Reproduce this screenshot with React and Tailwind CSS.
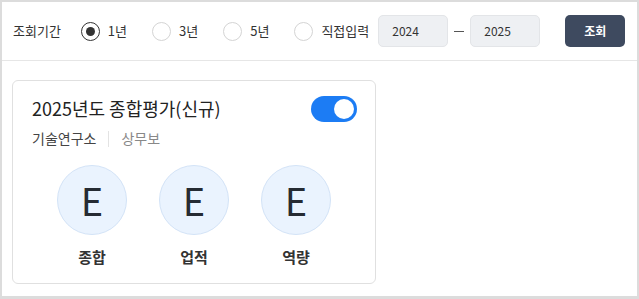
import React from "react";

function Radio({ checked, label }) {
  return (
    <label className="flex items-center gap-[8px]">
      <span
        className={
          "flex h-[19px] w-[19px] items-center justify-center rounded-full border bg-white " +
          (checked ? "border-[#333] border-[1.5px]" : "border-[#d4d4d4]")
        }
      >
        {checked && <span className="h-[9px] w-[9px] rounded-full bg-[#333]" />}
      </span>
      <span className="text-[13px] text-[#333]">{label}</span>
    </label>
  );
}

function Grade({ label }) {
  return (
    <div className="flex w-[70px] flex-col items-center">
      <div className="flex h-[70px] w-[70px] items-center justify-center rounded-full border border-[#d3e3f7] bg-[#eaf3fe]">
        <span className="text-[38px] leading-none text-[#262b33]">E</span>
      </div>
      <div className="mt-[11px] text-[15px] font-bold text-[#333]">{label}</div>
    </div>
  );
}

export default function App() {
  return (
    <div
      className="h-[299px] w-[639px] border-2 border-b-[3px] border-[#dcdcdc] bg-white"
      style={{ fontFamily: '"Noto Sans CJK KR", "Noto Sans", sans-serif' }}
    >
      <div className="flex h-[59px] items-center border-b border-[#e6e6e6] pl-[11px]">
        <span className="text-[13px] text-[#333]">조회기간</span>
        <div className="ml-[20px] flex items-center gap-[25px]">
          <Radio checked label="1년" />
          <Radio label="3년" />
          <Radio label="5년" />
          <Radio label="직접입력" />
        </div>
        <div className="ml-[9px] flex h-[32px] w-[70px] items-center rounded-[5px] border border-[#e3e5e8] bg-[#eef0f3] pl-[13px] text-[12px] text-[#333]">
          2024
        </div>
        <span className="mx-[6px] h-px w-[10px] bg-[#555]" />
        <div className="flex h-[32px] w-[70px] items-center rounded-[5px] border border-[#e3e5e8] bg-[#eef0f3] pl-[13px] text-[12px] text-[#333]">
          2025
        </div>
        <button className="ml-[25px] flex h-[32px] w-[60px] items-center justify-center rounded-[5px] bg-[#3e4a5f] text-[12px] font-bold text-white">
          조회
        </button>
      </div>
      <div className="pl-[10px] pt-[19px]">
        <div className="h-[204px] w-[364px] rounded-[6px] border border-[#e0e0e0] bg-white pl-[19px] pr-[18px] pt-[14px]">
          <div className="flex items-center justify-between">
            <span className="text-[18px] text-[#222]">2025년도 종합평가(신규)</span>
            <div className="flex h-[26px] w-[46px] items-center justify-end rounded-full bg-[#1c7cf4] pr-[3px]">
              <div className="h-[20px] w-[20px] rounded-full bg-white" />
            </div>
          </div>
          <div className="mt-[6px] flex items-center text-[14px]">
            <span className="text-[#444]">기술연구소</span>
            <span className="mx-[12px] h-[16px] w-px bg-[#e3e3e3]" />
            <span className="text-[#888]">상무보</span>
          </div>
          <div className="ml-[25px] mt-[16px] flex gap-[32px]">
            <Grade label="종합" />
            <Grade label="업적" />
            <Grade label="역량" />
          </div>
        </div>
      </div>
    </div>
  );
}
